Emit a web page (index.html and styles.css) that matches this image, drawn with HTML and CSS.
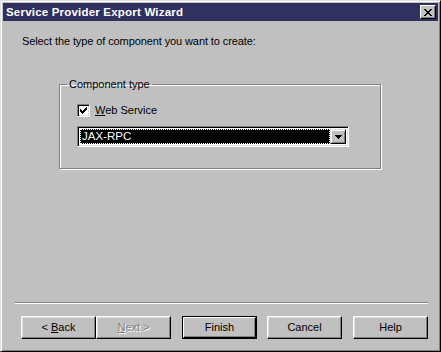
FILE: index.html
```html
<!DOCTYPE html>
<html>
<head>
<meta charset="utf-8">
<link rel="stylesheet" href="styles.css">
</head>
<body>
<div class="window">
  <div class="titlebar">
    <span class="title">Service Provider Export Wizard</span>
    <span class="close-btn"><svg width="8" height="7" viewBox="0 0 8 7"><path d="M0 0h2v1h1v1h2V1h1V0h2v1H7v1H6v1H5v1h1v1h1v1h1v1H6V6H5V5H3v1H2v1H0V6h1V5h1V4h1V3H2V2H1V1H0z" fill="#000"/></svg></span>
  </div>
  <div class="body">
    <p class="prompt">Select the type of component you want to create:</p>
    <fieldset class="group">
      <legend class="legend">Component type</legend>
      <div class="check-row">
        <span class="checkbox"><svg width="7" height="7" viewBox="0 0 7 7"><path d="M6 0h1v3H6v1H5v1H4v1H3v1H2V6H1V5H0V2h1v1h1v1h1V3h1V2h1V1h1z" fill="#000"/></svg></span>
        <span class="check-label"><u>W</u>eb Service</span>
      </div>
      <div class="combo">
        <div class="combo-value"><span class="combo-text">JAX-RPC</span></div>
        <span class="combo-btn"><svg width="7" height="4" viewBox="0 0 7 4"><path d="M0 0h7v1H6v1H5v1H4v1H3V3H2V2H1V1H0z" fill="#000"/></svg></span>
      </div>
    </fieldset>
    <div class="spacer"></div>
    <div class="separator"></div>
    <div class="buttons">
      <div class="pair">
        <span class="btn"><span>&lt; <u>B</u>ack</span></span>
        <span class="btn disabled"><span><u>N</u>ext &gt;</span></span>
      </div>
      <span class="btn default"><span class="inner">Finish</span></span>
      <span class="btn cancel">Cancel</span>
      <span class="btn help">Help</span>
    </div>
  </div>
</div>
</body>
</html>
```

FILE: styles.css
```css
* { box-sizing: border-box; }
html, body { margin: 0; padding: 0; }
body {
  width: 441px;
  height: 352px;
  background: #c0c0c0;
  font-family: "Liberation Sans", Arial, sans-serif;
  font-size: 11px;
  color: #000;
}
.window {
  width: 441px;
  height: 352px;
  background: #c0c0c0;
  border: 1px solid;
  border-color: #dfdfdf #000 #000 #dfdfdf;
  box-shadow: inset 1px 1px 0 #fff, inset -1px -1px 0 #808080;
  padding: 2px;
  display: flex;
  flex-direction: column;
}
.titlebar {
  height: 18px;
  background: #31315f;
  display: flex;
  align-items: center;
  justify-content: space-between;
  padding: 0 2px 0 3px;
}
.title {
  color: #fff;
  font-weight: bold;
  font-size: 11.5px;
  letter-spacing: 0.2px;
}
.close-btn {
  width: 16px;
  height: 14px;
  background: #c0c0c0;
  border: 1px solid;
  border-color: #fff #000 #000 #fff;
  box-shadow: inset -1px -1px 0 #808080;
  display: flex;
  align-items: center;
  justify-content: center;
  padding-right: 1px;
}
.body {
  flex: 1;
  display: flex;
  flex-direction: column;
  padding: 14px 10px 10px 11px;
}
.prompt {
  margin: 0 0 0 8px;
  line-height: 13px;
  letter-spacing: -0.1px;
}
.group {
  margin: 30px 0 0 45px;
  width: 322px;
  height: 91px;
  padding: 0 0 0 17px;
  border: 1px solid #808080;
  box-shadow: 1px 1px 0 #fff, inset 1px 1px 0 #fff;
  min-width: 0;
}
.legend {
  padding: 0 2px;
  margin-left: -10px;
  line-height: 13px;
}
.check-row {
  display: flex;
  align-items: center;
  gap: 5px;
  margin-top: 13px;
  height: 13px;
}
.checkbox {
  width: 13px;
  height: 13px;
  background: #fff;
  border: 1px solid;
  border-color: #808080 #fff #fff #808080;
  box-shadow: inset 1px 1px 0 #000, inset -1px -1px 0 #dfdfdf;
  display: flex;
  align-items: center;
  justify-content: center;
}
.check-label { line-height: 13px; }
.combo {
  margin-top: 9px;
  width: 272px;
  height: 21px;
  border: 1px solid;
  border-color: #808080 #fff #fff #808080;
  box-shadow: inset 1px 1px 0 #000, inset -1px -1px 0 #dfdfdf;
  background: #fff;
  padding: 2px;
  display: flex;
}
.combo-value {
  flex: 1;
  background: #000;
  border: 1px dotted #fff;
  display: flex;
  align-items: center;
  padding-left: 1px;
}
.combo-text {
  color: #fff;
  line-height: 13px;
  font-size: 11.5px;
}
.combo-btn {
  width: 16px;
  background: #c0c0c0;
  border: 1px solid;
  border-color: #dfdfdf #000 #000 #dfdfdf;
  box-shadow: inset 1px 1px 0 #fff, inset -1px -1px 0 #808080;
  display: flex;
  align-items: center;
  justify-content: center;
  padding-left: 1px;
}
.spacer { flex: 1; }
.separator {
  height: 2px;
  margin: 0 0 0 1px;
  border-top: 1px solid #808080;
  border-bottom: 1px solid #fff;
}
.buttons {
  display: flex;
  margin-top: 12px;
  margin-left: 7px;
}
.pair { display: flex; }
.btn {
  width: 75px;
  height: 23px;
  border: 1px solid;
  border-color: #fff #000 #000 #fff;
  box-shadow: inset -1px -1px 0 #808080, inset 1px 1px 0 #dfdfdf;
  display: flex;
  align-items: center;
  justify-content: center;
  line-height: 13px;
  background: #c0c0c0;
}
.btn.disabled {
  color: #808080;
  text-shadow: 1px 1px 0 #fff;
}
.btn.default {
  margin-left: 11px;
  border: 1px solid #000;
  box-shadow: none;
  padding: 0;
}
.btn.cancel { margin-left: 10px; }
.btn.help { margin-left: 11px; }
.btn.default .inner {
  width: 100%;
  height: 100%;
  border: 1px solid;
  border-color: #fff #000 #000 #fff;
  box-shadow: inset -1px -1px 0 #808080;
  display: flex;
  align-items: center;
  justify-content: center;
}
```
